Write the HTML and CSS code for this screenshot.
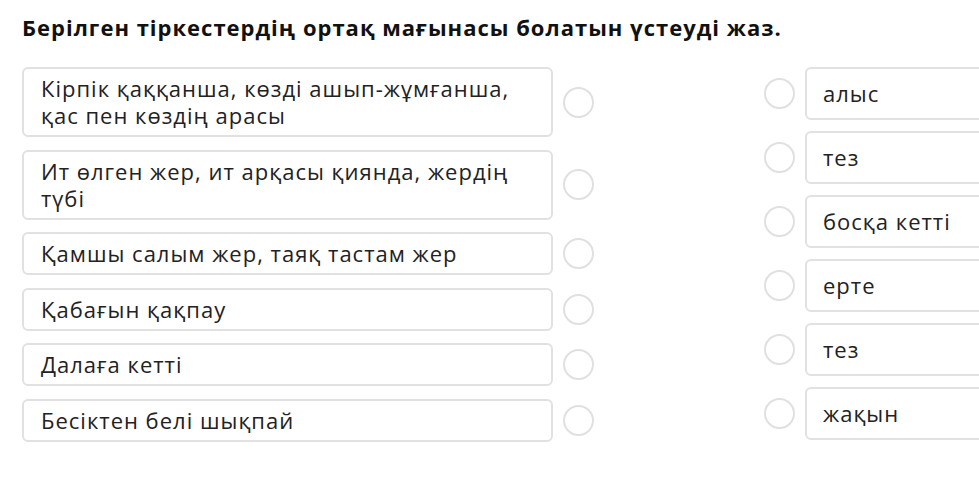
FILE: index.html
```html
<!DOCTYPE html>
<html lang="kk">
<head>
  <meta charset="UTF-8" />
  <meta name="viewport" content="width=device-width, initial-scale=1.0" />
  <title>Сәйкестендіру</title>
  <link rel="stylesheet" href="styles.css">
</head>
<body>
  <div class="quiz">
    <h1>Берілген тіркестердің ортақ мағынасы болатын үстеуді жаз.</h1>

    <div class="match">
      <div class="column left">
        <div class="row">
          <div class="card">Кірпік қаққанша, көзді ашып-жұмғанша, қас пен көздің арасы</div>
          <span class="dot"></span>
        </div>
        <div class="row">
          <div class="card">Ит өлген жер, ит арқасы қиянда, жердің түбі</div>
          <span class="dot"></span>
        </div>
        <div class="row">
          <div class="card">Қамшы салым жер, таяқ тастам жер</div>
          <span class="dot"></span>
        </div>
        <div class="row">
          <div class="card">Қабағын қақпау</div>
          <span class="dot"></span>
        </div>
        <div class="row">
          <div class="card">Далаға кетті</div>
          <span class="dot"></span>
        </div>
        <div class="row">
          <div class="card">Бесіктен белі шықпай</div>
          <span class="dot"></span>
        </div>
      </div>

      <div class="column right">
        <div class="row">
          <span class="dot"></span>
          <div class="card">алыс</div>
        </div>
        <div class="row">
          <span class="dot"></span>
          <div class="card">тез</div>
        </div>
        <div class="row">
          <span class="dot"></span>
          <div class="card">босқа кетті</div>
        </div>
        <div class="row">
          <span class="dot"></span>
          <div class="card">ерте</div>
        </div>
        <div class="row">
          <span class="dot"></span>
          <div class="card">тез</div>
        </div>
        <div class="row">
          <span class="dot"></span>
          <div class="card">жақын</div>
        </div>
      </div>
    </div>
  </div>
</body>
</html>
```

FILE: styles.css
```css
* {
  margin: 0;
  padding: 0;
  box-sizing: border-box;
  font-family: 'Open Sans', 'Noto Sans', sans-serif;
}

body {
  background: #fff;
  color: #222;
  overflow: hidden;
}

.quiz {
  padding: 14px 0 0 22px;
  width: 1100px;
}

h1 {
  font-size: 22px;
  line-height: 27px;
  font-weight: 700;
  letter-spacing: 1px;
  color: #111;
  margin-bottom: 26px;
}

.match {
  display: flex;
  align-items: flex-start;
  gap: 170px;
}

.column {
  display: flex;
  flex-direction: column;
}

.left {
  width: 572px;
  gap: 12.5px;
}

.right {
  gap: 11px;
}

.row {
  display: flex;
  align-items: center;
  gap: 10px;
}

.card {
  border: 2px solid #e1e1e1;
  border-radius: 6px;
  font-size: 22px;
  line-height: 27px;
  letter-spacing: 1px;
  color: #222;
  background: #fff;
}

.left .card {
  width: 531px;
  padding: 6px 18px 6px 17px;
}

.right .card {
  width: 240px;
  padding: 11px 17px 11px 16px;
}

.dot {
  flex: 0 0 31px;
  width: 31px;
  height: 31px;
  border: 2px solid #e0e0e0;
  border-radius: 50%;
}
```
